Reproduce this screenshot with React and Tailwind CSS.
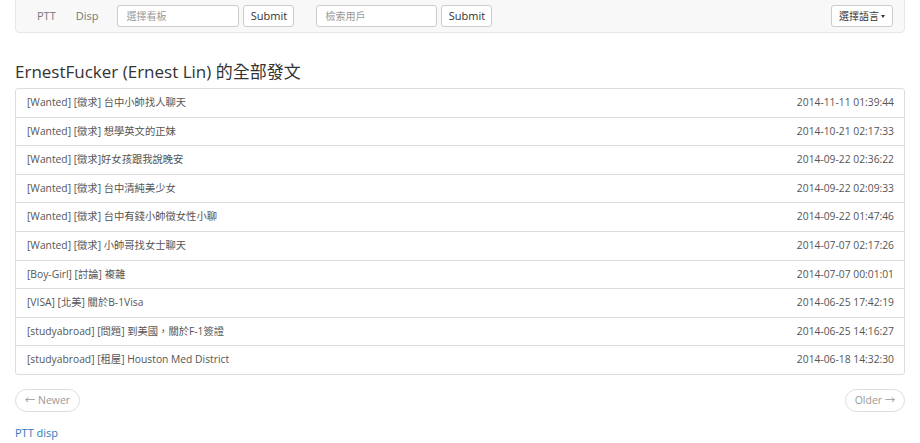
import React from 'react'

const posts = [
  { title: '[Wanted] [徵求] 台中小帥找人聊天', date: '2014-11-11 01:39:44' },
  { title: '[Wanted] [徵求] 想學英文的正妹', date: '2014-10-21 02:17:33' },
  { title: '[Wanted] [徵求]好女孩跟我說晚安', date: '2014-09-22 02:36:22' },
  { title: '[Wanted] [徵求] 台中清純美少女', date: '2014-09-22 02:09:33' },
  { title: '[Wanted] [徵求] 台中有錢小帥徵女性小聊', date: '2014-09-22 01:47:46' },
  { title: '[Wanted] [徵求] 小帥哥找女士聊天', date: '2014-07-07 02:17:26' },
  { title: '[Boy-Girl] [討論] 複雜', date: '2014-07-07 00:01:01' },
  { title: '[VISA] [北美] 關於B-1Visa', date: '2014-06-25 17:42:19' },
  { title: '[studyabroad] [問題] 到美國，關於F-1簽證', date: '2014-06-25 14:16:27' },
  { title: '[studyabroad] [租屋] Houston Med District', date: '2014-06-18 14:32:30' },
]

const font = { fontFamily: '"Open Sans", "Noto Sans CJK TC", sans-serif' }

const App = () => {
  return (
    <div className="w-[920px] h-[443px] bg-white overflow-hidden" style={font}>
      <div className="px-[15px]">
        {/* navbar */}
        <div className="-mt-px h-[34px] bg-[#f8f8f8] border border-[#e7e7e7] rounded-b-[4px] flex items-center pl-[21px] pr-[11px]">
          <span className="text-[11px] text-[#777]">PTT</span>
          <span className="text-[11px] text-[#777] ml-[20px]">Disp</span>
          <input
            placeholder="選擇看板"
            className="ml-[19px] w-[122px] h-[22px] bg-white border border-[#ccc] rounded-[3px] px-[8px] text-[10px] placeholder:text-[#999] outline-none"
          />
          <button className="ml-[4px] h-[22px] w-[51px] bg-white border border-[#ccc] rounded-[3px] text-[11px] text-[#333]">Submit</button>
          <input
            placeholder="檢索用戶"
            className="ml-[22px] w-[121px] h-[22px] bg-white border border-[#ccc] rounded-[3px] px-[8px] text-[10px] placeholder:text-[#999] outline-none"
          />
          <button className="ml-[4px] h-[22px] w-[51px] bg-white border border-[#ccc] rounded-[3px] text-[11px] text-[#333]">Submit</button>
          <button className="ml-auto h-[22px] w-[62px] bg-white border border-[#ccc] rounded-[3px] text-[10px] text-[#333] flex items-center justify-center gap-[2px]">
            選擇語言
            <span className="inline-block w-0 h-0 border-l-[2.5px] border-r-[2.5px] border-t-[3px] border-l-transparent border-r-transparent border-t-[#333]"></span>
          </button>
        </div>

        <h3 className="mt-[27px] text-[17px] leading-[24px] text-[#333]">ErnestFucker (Ernest Lin) 的全部發文</h3>

        <div className="mt-[4px] border border-[#ddd] rounded-[3px] divide-y divide-[#ddd]">
          {posts.map((post, i) => (
            <div key={i} className="h-[27.6px] box-content flex items-center justify-between pl-[11px] pr-[10px] text-[10.3px] text-[#555]">
              <span>{post.title}</span>
              <span>{post.date}</span>
            </div>
          ))}
        </div>

        <div className="mt-[14px] flex justify-between">
          <span className="h-[23px] w-[65px] border border-[#ddd] rounded-full text-[10.5px] text-[#999] flex items-center justify-center">← Newer</span>
          <span className="h-[23px] w-[60px] border border-[#ddd] rounded-full text-[10.5px] text-[#999] flex items-center justify-center">Older →</span>
        </div>

        <div className="mt-[13px] text-[11px] text-[#337ab7]">PTT disp</div>
      </div>
    </div>
  )
}

export default App
